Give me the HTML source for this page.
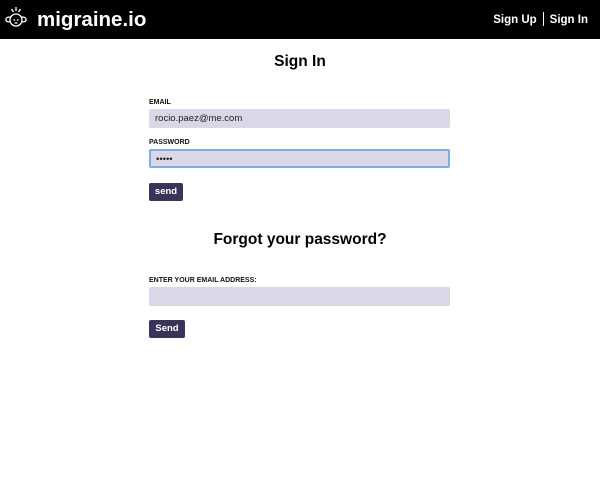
<!DOCTYPE html>
<html><head><meta charset="utf-8"><style>
*{margin:0;padding:0;box-sizing:border-box}
body{width:600px;height:478px;background:#fff;font-family:"Liberation Sans",Arial,sans-serif;position:relative;overflow:hidden}
.hdr{position:absolute;left:0;top:0;width:600px;height:39px;background:#000;color:#fff}
.logo{position:absolute;left:37px;top:8px;font-size:20.5px;font-weight:bold}
.nav{position:absolute;right:12px;top:12px;font-size:11.5px;font-weight:bold}
.nav span{display:inline-block;margin:0 6px;width:1px;height:14px;background:#fff;vertical-align:-3px}
h1,h2{position:absolute;left:0;width:600px;text-align:center;font-size:15.5px;font-weight:bold;color:#000}
.lbl{position:absolute;left:149px;font-size:7px;font-weight:bold;color:#111}
.inp{position:absolute;left:149px;width:301px;height:19px;background:#dad8e6;border-radius:2px;font-size:9.5px;color:#222;padding:4px 6px}
.inp.f{border:2px solid #7eaee0;padding:3px 5px}
.btn{position:absolute;left:149px;height:18px;background:#3a3558;color:#fff;font-size:9.5px;font-weight:bold;border-radius:2px;text-align:center;line-height:18px}
</style></head><body>
<div class="hdr">
<svg style="position:absolute;left:0;top:0" width="40" height="38" viewBox="0 0 40 38" fill="none" stroke="#fff" stroke-width="1.3">
<path d="M16 7v4M11.5 9l2 3M20.5 9l-2 3"/>
<circle cx="16" cy="20" r="6"/>
<path d="M10.5 17.5c-3-1.5-5 1-4.5 3 1 1.5 3 1.5 4.5 1M21.5 17.5c3-1.5 5 1 4.5 3-1 1.5-3 1.5-4.5 1"/>
<path d="M13.5 19.5l1.5 1M18.5 19.5l-1.5 1M14.5 23h3"/>
</svg>
<div class="logo">migraine.io</div>
<div class="nav">Sign Up<span></span>Sign In</div>
</div>
<h1 style="top:53px">Sign In</h1>
<div class="lbl" style="top:99px">EMAIL</div>
<div class="inp" style="top:109px">rocio.paez@me.com</div>
<div class="lbl" style="top:139px">PASSWORD</div>
<div class="inp f" style="top:149px">•••••</div>
<div class="btn" style="top:183px;width:34px">send</div>
<h2 style="top:231px">Forgot your password?</h2>
<div class="lbl" style="top:277px">ENTER YOUR EMAIL ADDRESS:</div>
<div class="inp" style="top:287px"></div>
<div class="btn" style="top:320px;width:36px">Send</div>
</body></html>
